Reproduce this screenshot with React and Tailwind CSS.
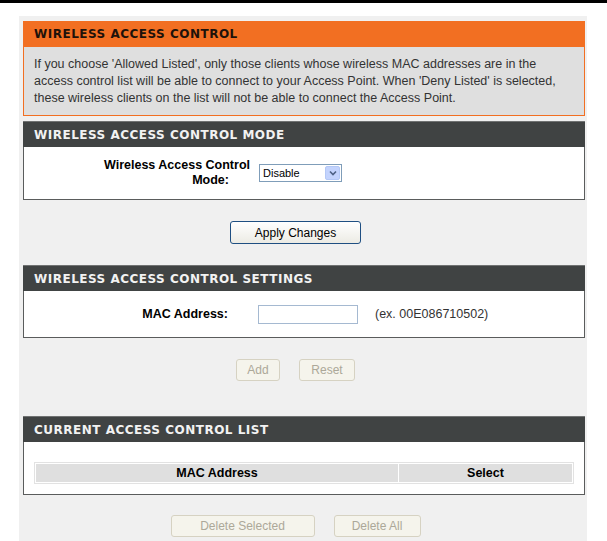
import { useState } from 'react'

const sans = { fontFamily: '"Liberation Sans", Arial, sans-serif' }

function DarkHeader({ children }) {
  return (
    <div className="h-[26px] bg-[#404343] border-t border-[#707272] px-[11px] flex items-center">
      <span className="font-['DejaVu_Sans',sans-serif] font-bold text-[12px] tracking-[0.5px] text-[#f2f2f2] uppercase">
        {children}
      </span>
    </div>
  )
}

function Panel({ children, className = '' }) {
  return (
    <div className={`bg-white border-x border-b border-[#5a5c5c] ${className}`}>{children}</div>
  )
}

function DisabledBtn({ children, w }) {
  return (
    <button
      disabled
      className={`${w} h-[22px] rounded-[3px] border border-[#d6d2c2] bg-[#f5f4ec] text-[12px] text-[#aca899]`}
    >
      {children}
    </button>
  )
}

function ButtonRow({ children, className = '' }) {
  return <div className={`flex justify-center gap-[19px] pr-[17px] ${className}`}>{children}</div>
}

export default function App() {
  const [mode, setMode] = useState('Disable')
  const [mac, setMac] = useState('')

  return (
    <div className="w-[607px] h-[541px] bg-white overflow-hidden text-[12px] text-[#222]" style={sans}>
      <div className="h-[3px] bg-black" />

      <div className="ml-[19px] w-[568px] mt-[13px] bg-[#f0f0f0] pl-[4px] pr-[2px] pt-[5px] pb-[40px]">
        {/* intro */}
        <div className="h-[26px] bg-[#f26f22] px-[11px] flex items-center">
          <span className="font-['DejaVu_Sans',sans-serif] font-bold text-[12px] tracking-[0.5px] text-[#1e120a]">
            WIRELESS ACCESS CONTROL
          </span>
        </div>
        <div className="h-[69px] bg-[#dfdfdf] border-x border-b border-[#f26f22] px-[10px] pt-[9px] leading-[17px] text-[12.5px] text-[#333]">
          If you choose 'Allowed Listed', only those clients whose wireless MAC addresses are in the
          <br />
          access control list will be able to connect to your Access Point. When 'Deny Listed' is selected,
          <br />
          these wireless clients on the list will not be able to connect the Access Point.
        </div>

        {/* mode */}
        <div className="mt-[5px]">
          <DarkHeader>Wireless Access Control Mode</DarkHeader>
          <Panel className="h-[53px] flex items-center">
            <div className="w-[226px] text-right font-bold text-[12.5px] leading-[15px] text-black">
              Wireless Access Control
              <br />
              <span className="pr-[21px]">Mode:</span>
            </div>
            <div className="ml-[9px] relative w-[83px] h-[18px] border border-[#7f9db9] bg-white flex items-center">
              <select
                value={mode}
                onChange={e => setMode(e.target.value)}
                className="appearance-none w-full h-full pl-[3px] text-[11px] text-black bg-transparent outline-none"
              >
                <option>Disable</option>
                <option>Allow Listed</option>
                <option>Deny Listed</option>
              </select>
              <span className="pointer-events-none absolute right-[1px] top-[1px] w-[15px] h-[14px] rounded-[2px] bg-[#c3d3fd] border border-[#b4c8f6] flex items-center justify-center">
                <svg width="8" height="6" viewBox="0 0 8 6">
                  <path d="M1 1.5 L4 4.5 L7 1.5" fill="none" stroke="#4d6185" strokeWidth="1.6" />
                </svg>
              </span>
            </div>
          </Panel>
        </div>

        <ButtonRow className="pt-[21px] pb-[21px]">
          <button className="w-[131px] h-[23px] rounded-[3px] border border-[#1f4f82] bg-gradient-to-b from-white to-[#ecebe4] text-[12px] text-black">
            Apply Changes
          </button>
        </ButtonRow>

        {/* settings */}
        <DarkHeader>Wireless Access Control Settings</DarkHeader>
        <Panel className="h-[47px] flex items-center">
          <div className="w-[204px] text-right font-bold text-[12.5px] text-black">MAC Address:</div>
          <input
            value={mac}
            onChange={e => setMac(e.target.value)}
            className="ml-[30px] w-[100px] h-[19px] border border-[#a5b9d1] bg-white outline-none px-1 text-[12px]"
          />
          <span className="ml-[17px] text-[12.5px] text-[#333]">(ex. 00E086710502)</span>
        </Panel>

        <ButtonRow className="pt-[21px] pb-[35px]">
          <DisabledBtn w="w-[44px]">Add</DisabledBtn>
          <DisabledBtn w="w-[56px]">Reset</DisabledBtn>
        </ButtonRow>

        {/* list */}
        <DarkHeader>Current Access Control List</DarkHeader>
        <Panel className="h-[53px] pt-[20px] px-[10px]">
          <div className="flex border border-[#e2e2e2] bg-white p-px gap-px">
            <div className="w-[362px] h-[18px] bg-[#dfdfdf] flex items-center justify-center font-bold text-[12.5px] text-black">
              MAC Address
            </div>
            <div className="flex-1 h-[18px] bg-[#dfdfdf] flex items-center justify-center font-bold text-[12.5px] text-black">
              Select
            </div>
          </div>
        </Panel>

        <ButtonRow className="pt-[20px]">
          <DisabledBtn w="w-[144px]">Delete Selected</DisabledBtn>
          <DisabledBtn w="w-[87px]">Delete All</DisabledBtn>
        </ButtonRow>
      </div>
    </div>
  )
}
